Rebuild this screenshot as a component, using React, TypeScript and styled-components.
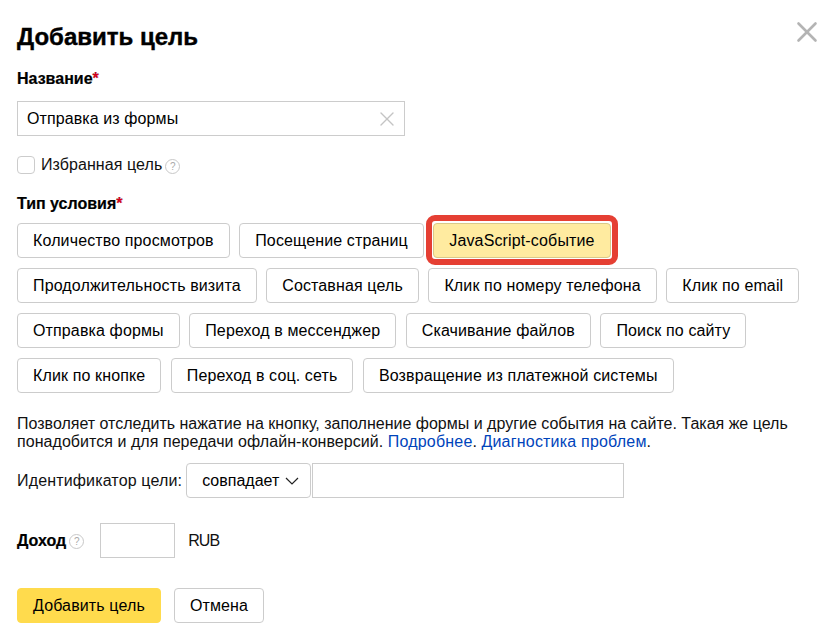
import React from "react";
import styled, { createGlobalStyle } from "styled-components";
import { X } from "lucide-react";

const Global = createGlobalStyle`
  html, body { margin: 0; padding: 0; background: #fff; }
  body { font-family: "Liberation Sans", Arial, sans-serif; font-size: 16px; color: #000; }
`;

const Dialog = styled.form`
  position: relative;
  width: 836px;
  height: 640px;
  box-sizing: border-box;
  padding: 21px 17px 0;
  overflow: hidden;
`;

const Close = styled.button`
  position: absolute;
  top: 15px;
  right: 12px;
  width: 34px;
  height: 34px;
  padding: 0;
  border: 0;
  background: none;
  color: #b4b4b4;
  display: flex;
  align-items: center;
  justify-content: center;
`;

const Title = styled.h1`
  margin: 0 0 17px;
  font-size: 24px;
  line-height: 32px;
  font-weight: 700;
  -webkit-text-stroke: 0.4px #000;
`;

const Label = styled.div`
  font-size: 16px;
  line-height: 18px;
  font-weight: 700;
  -webkit-text-stroke: 0.2px #000;
  span { color: #e8001c; }
`;

const TextField = styled.div<{ $width: number; $offset?: number }>`
  box-sizing: border-box;
  width: ${(p) => p.$width}px;
  height: 35px;
  margin-left: ${(p) => p.$offset ?? 0}px;
  border: 1px solid #ccc;
  display: flex;
  align-items: center;
  justify-content: space-between;
  padding: 0 5px 0 9px;
  line-height: 18px;
  color: #c4c4c4;
  background: #fff;
`;

const FieldText = styled.span`
  color: #000;
  letter-spacing: 0.1px;
`;

const NameBlock = styled.div`
  display: flex;
  flex-direction: column;
  gap: 13px;
`;

const FavoriteRow = styled.label`
  display: flex;
  align-items: center;
  height: 18px;
  margin: 20px 0 21px;
  line-height: 18px;
  color: #111;
  letter-spacing: 0.07px;
`;

const Check = styled.span`
  box-sizing: border-box;
  width: 18px;
  height: 18px;
  margin: 0 6px 0 0;
  border: 1px solid #ccc;
  border-radius: 4px;
  background: #fff;
`;

const Help = styled.span`
  box-sizing: border-box;
  width: 15px;
  height: 15px;
  margin: 2px 0 0 3px;
  border: 1px solid #c8c8c8;
  border-radius: 50%;
  color: #aaa;
  font-size: 10px;
  line-height: 13px;
  text-align: center;
  flex: none;
`;

const ChoiceGrid = styled.div`
  display: flex;
  flex-direction: column;
  gap: 10px;
  margin-top: 10px;
`;

const ChoiceRow = styled.div`
  display: flex;
  gap: 9.5px;
`;

const Btn = styled.button<{ $tone?: "active" | "primary" }>`
  box-sizing: border-box;
  height: 35px;
  padding: 0 15px;
  border: 1px solid
    ${(p) => (p.$tone === "active" ? "#d9c98a" : p.$tone === "primary" ? "#ffdb4d" : "#ccc")};
  border-radius: 4px;
  background: ${(p) => (p.$tone === "active" ? "#ffeba0" : p.$tone === "primary" ? "#ffdb4d" : "#fff")};
  color: #000;
  font: 16px/18px "Liberation Sans", Arial, sans-serif;
  letter-spacing: 0.13px;
  white-space: nowrap;
`;

const Highlight = styled.span`
  position: relative;
  display: flex;
  &::after {
    content: "";
    position: absolute;
    inset: -8px -7px -7px;
    border: 6px solid #e53f33;
    border-radius: 9px;
    pointer-events: none;
  }
`;

const Hint = styled.p`
  margin: 22px 0 12px;
  font-size: 16px;
  line-height: 18px;
  color: #111;
  a { color: #04b; text-decoration: none; letter-spacing: 0.2px; }
`;

const HintLead = styled.span`
  letter-spacing: 0.05px;
`;

const IdRow = styled.div`
  display: flex;
  align-items: center;
  height: 35px;
`;

const IdLabel = styled.span`
  margin-right: 4px;
  color: #111;
  letter-spacing: 0.15px;
`;

const SelectBtn = styled(Btn)`
  display: flex;
  align-items: center;
  gap: 6px;
  margin-right: 1px;
  padding: 0 11px 0 15px;
  letter-spacing: 0;
`;

const IncomeRow = styled.div`
  display: flex;
  align-items: center;
  height: 35px;
  margin-top: 25px;
`;

const Currency = styled.span`
  margin-left: 13px;
  color: #111;
  letter-spacing: -0.9px;
`;

const Actions = styled.div`
  display: flex;
  gap: 13px;
  margin-top: 30px;
`;

const rows = [
  ["Количество просмотров", "Посещение страниц", "JavaScript-событие"],
  ["Продолжительность визита", "Составная цель", "Клик по номеру телефона", "Клик по email"],
  ["Отправка формы", "Переход в мессенджер", "Скачивание файлов", "Поиск по сайту"],
  ["Клик по кнопке", "Переход в соц. сеть", "Возвращение из платежной системы"],
];

export default function App() {
  return (
    <Dialog>
      <Global />
      <Close type="button" aria-label="Закрыть">
        <X size={34} strokeWidth={2.6} absoluteStrokeWidth />
      </Close>
      <Title>Добавить цель</Title>
      <NameBlock>
        <Label>
          Название<span>*</span>
        </Label>
        <TextField $width={388}>
          <FieldText>Отправка из формы</FieldText>
          <X size={24} strokeWidth={1.4} absoluteStrokeWidth />
        </TextField>
      </NameBlock>
      <FavoriteRow>
        <Check />
        Избранная цель
        <Help>?</Help>
      </FavoriteRow>
      <Label>
        Тип условия<span>*</span>
      </Label>
      <ChoiceGrid>
        {rows.map((row) => (
          <ChoiceRow key={row[0]}>
            {row.map((item) =>
              item === "JavaScript-событие" ? (
                <Highlight key={item}>
                  <Btn type="button" $tone="active">
                    {item}
                  </Btn>
                </Highlight>
              ) : (
                <Btn type="button" key={item}>
                  {item}
                </Btn>
              )
            )}
          </ChoiceRow>
        ))}
      </ChoiceGrid>
      <Hint>
        Позволяет отследить нажатие на кнопку, заполнение формы и другие события на сайте. Такая же цель
        <br />
        <HintLead>понадобится и для передачи офлайн-конверсий. </HintLead>
        <a href="#a">Подробнее</a>. <a href="#b">Диагностика проблем</a>.
      </Hint>
      <IdRow>
        <IdLabel>Идентификатор цели:</IdLabel>
        <SelectBtn type="button">
          совпадает
          <svg width="14" height="8" viewBox="0 0 14 8" fill="none" stroke="#222" strokeWidth="1.2">
            <path d="M1 1 7 7l6-6" />
          </svg>
        </SelectBtn>
        <TextField $width={312} />
      </IdRow>
      <IncomeRow>
        <Label>Доход</Label>
        <Help>?</Help>
        <TextField $width={75} $offset={16} />
        <Currency>RUB</Currency>
      </IncomeRow>
      <Actions>
        <Btn type="button" $tone="primary">
          Добавить цель
        </Btn>
        <Btn type="button">Отмена</Btn>
      </Actions>
    </Dialog>
  );
}
